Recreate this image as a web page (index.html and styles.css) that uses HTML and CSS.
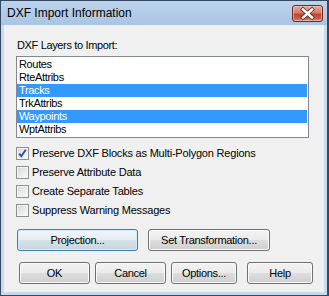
FILE: index.html
```html
<!DOCTYPE html>
<html>
<head>
<meta charset="utf-8">
<link rel="stylesheet" href="styles.css">
</head>
<body>
<div class="window">
  <div class="titlebar">
    <span class="title">DXF Import Information</span>
    <div class="close">
      <svg width="31" height="17" viewBox="0 0 31 17">
        <path d="M11 4.5 L20 12.5 M20 4.5 L11 12.5" stroke="#5a3a36" stroke-width="4.2" stroke-linecap="square" fill="none"/>
        <path d="M11 4.5 L20 12.5 M20 4.5 L11 12.5" stroke="#ffffff" stroke-width="2.4" stroke-linecap="square" fill="none"/>
      </svg>
    </div>
  </div>
  <div class="client">
    <div class="label">DXF Layers to Import:</div>
    <ul class="list">
      <li>Routes</li>
      <li>RteAttribs</li>
      <li class="sel">Tracks</li>
      <li>TrkAttribs</li>
      <li class="sel">Waypoints</li>
      <li>WptAttribs</li>
    </ul>
    <div class="checks">
      <div class="check"><span class="box"><svg width="11" height="11" viewBox="0 0 11 11"><path d="M2.2 5.6 L4.3 8.2 L8.8 1.8" stroke="#2c4f9e" stroke-width="1.9" fill="none"/></svg></span><span>Preserve DXF Blocks as Multi-Polygon Regions</span></div>
      <div class="check"><span class="box"></span><span>Preserve Attribute Data</span></div>
      <div class="check"><span class="box"></span><span>Create Separate Tables</span></div>
      <div class="check"><span class="box"></span><span>Suppress Warning Messages</span></div>
    </div>
    <div class="row1">
      <div class="btn focused w-proj">Projection...</div>
      <div class="btn w-set">Set Transformation...</div>
    </div>
    <div class="row2">
      <div class="btn w-ok">OK</div>
      <div class="btn w-cancel">Cancel</div>
      <div class="btn w-opt">Options...</div>
      <div class="btn w-help">Help</div>
    </div>
  </div>
</div>
</body>
</html>
```

FILE: styles.css
```css
html, body {
  margin: 0;
  padding: 0;
}
body {
  width: 329px;
  height: 296px;
  overflow: hidden;
  font-family: "Liberation Sans", Arial, sans-serif;
  font-size: 11px;
  color: #000;
}
.window {
  width: 329px;
  height: 296px;
  box-sizing: border-box;
  border: 1px solid #34485f;
  border-right-width: 2px;
  background: linear-gradient(#bed5ec, #c6dbef 30px, #c6dbef);
  padding: 0 3px 3px 3px;
  display: flex;
  flex-direction: column;
}
.titlebar {
  height: 24px;
  display: flex;
  align-items: flex-start;
  background: linear-gradient(#bcd3eb, #a9c5e4);
  margin: 0 -3px;
  padding: 0 3px;
}
.title {
  font-size: 12px;
  margin-left: 3px;
  margin-top: 5px;
  line-height: 15px;
  color: #000;
}
.close {
  margin-left: auto;
  margin-top: 4px;
  margin-right: 1px;
  width: 31px;
  height: 17px;
  box-sizing: border-box;
  border: 1px solid #6b2a22;
  border-radius: 3px;
  background: linear-gradient(#e6a898 0%, #d57d6b 45%, #c2412d 55%, #cf5e48 85%, #e7957f 100%);
  box-shadow: inset 0 0 0 1px rgba(255,220,210,0.5);
  position: relative;
}
.close svg {
  position: absolute;
  left: -1px;
  top: -1px;
}
.client {
  flex: 1;
  background: #f0f0f0;
  padding: 14px 0 0 12px;
  display: flex;
  flex-direction: column;
  align-items: flex-start;
}
.label {
  line-height: 13px;
  letter-spacing: -0.35px;
  margin-left: 1px;
}
.list {
  list-style: none;
  margin: 4px 0 0 0;
  padding: 1px 1px 0 0;
  width: 293px;
  height: 82px;
  box-sizing: border-box;
  border: 1px solid #828790;
  background: #fff;
}
.list li {
  height: 13px;
  line-height: 13px;
  padding-left: 2px;
  letter-spacing: -0.35px;
}
.list li.sel {
  background: #3399ff;
  color: #fff;
}
.checks {
  margin-top: 9px;
  display: flex;
  flex-direction: column;
  gap: 6px;
}
.check {
  display: flex;
  align-items: center;
  height: 13px;
  line-height: 13px;
  letter-spacing: -0.2px;
}
.box {
  width: 13px;
  height: 13px;
  box-sizing: border-box;
  border: 1px solid #8e8f8f;
  background: linear-gradient(135deg, #d2d4d8 0%, #e9eaec 50%, #f8f8f8 100%);
  box-shadow: inset 0 0 0 1px #f4f4f4;
  margin-right: 3px;
  display: flex;
  align-items: center;
  justify-content: center;
}
.box svg {
  display: block;
}
.row1 {
  display: flex;
  margin-top: 12px;
  margin-left: 1px;
  gap: 10px;
}
.row2 {
  display: flex;
  margin-top: 11px;
  margin-left: 3px;
  gap: 5px;
}
.btn {
  height: 22px;
  box-sizing: border-box;
  border: 1px solid #707070;
  border-radius: 3px;
  background: linear-gradient(#f2f2f2 0%, #ebebeb 48%, #dddddd 52%, #cfcfcf 100%);
  box-shadow: inset 0 0 0 1px #fbfbfb;
  display: flex;
  align-items: center;
  justify-content: center;
  line-height: 13px;
  letter-spacing: -0.3px;
}
.btn.focused {
  border-color: #3c7fb1;
  box-shadow: inset 0 0 0 1px #cdeefb;
  background: linear-gradient(#f0f5f8 0%, #e6eef3 48%, #d6e0e7 52%, #c9d5dd 100%);
}
.w-proj { width: 121px; }
.w-set { width: 122px; }
.w-ok { width: 71px; }
.w-cancel { width: 71px; }
.w-opt { width: 66px; }
.w-help { width: 66px; margin-left: 5px; }
```
